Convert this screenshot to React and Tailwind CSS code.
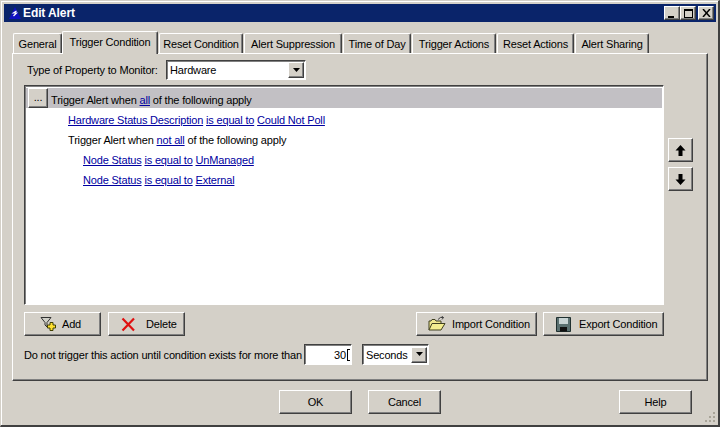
import React from "react";

const raised = "border border-t-white border-l-white border-r-[#404040] border-b-[#404040] shadow-[inset_-1px_-1px_0_#808080] bg-[#d4d0c8]";
const sunken = "border border-t-[#404040] border-l-[#404040] border-r-white border-b-white shadow-[inset_1px_1px_0_#808080]";
const link = "text-[#0000a0] underline";

function Tab({ w, active, children }) {
  return (
    <div
      className={
        active
          ? "relative z-10 -mb-px h-[23px] -ml-px mr-px flex items-center justify-center rounded-t-[2px] border-t border-l border-r border-t-white border-l-white border-r-[#404040] bg-[#d4d0c8] shadow-[inset_-1px_0_0_#808080] pb-[2px] whitespace-nowrap"
          : "mt-[2px] h-[20px] flex items-center justify-center rounded-t-[2px] border-t border-l border-r border-t-white border-l-white border-r-[#404040] shadow-[inset_-1px_0_0_#808080] mr-px whitespace-nowrap"
      }
      style={{ width: w }}
    >
      {children}
    </div>
  );
}

function Arrow() {
  return (
    <svg width="9" height="5" viewBox="0 0 9 5"><path d="M1 0h7L4.500 4z" fill="#000" /></svg>
  );
}

function DropBtn() {
  return <div className={`${raised} w-[16px] h-[16px] flex items-center justify-center`}><Arrow /></div>;
}

function Btn({ w, children, className = "" }) {
  return <div className={`${raised} h-[24px] flex items-center whitespace-nowrap ${className || "justify-center"}`} style={{ width: w }}>{children}</div>;
}

function WinBtn({ w = 16, children }) {
  return <div className={`${raised} h-[14px] flex items-center justify-center`} style={{ width: w }}>{children}</div>;
}

export default function App() {
  return (
    <div className="w-[720px] h-[427px] bg-[#d4d0c8] flex flex-col p-[4px] border-t border-l border-t-[#d4d0c8] border-r-2 border-b-2 border-r-[#404040] border-b-[#404040] border-l-[#d4d0c8] text-[11px] tracking-[-0.18px] leading-[14px] text-black overflow-hidden relative shadow-[inset_1px_1px_0_#fff]" style={{ fontFamily: '"Liberation Sans", Arial, sans-serif' }}>
      <div className="h-[18px] -mt-px -ml-px -mr-[2px] bg-[#0a246a] flex items-center shrink-0 pl-[3px] pr-[2px]">
        <svg width="16" height="16" viewBox="0 0 16 16" className="shrink-0">
          <path d="M8 2 L14 14 H2 Z" fill="#1010c0" />
          <path d="M9.500 6 L6.500 8 H9.500 L6.500 11" stroke="#fff" strokeWidth="1.200" fill="none" />
        </svg>
        <span className="text-white font-bold text-[12px] tracking-[-0.1px]">Edit Alert</span>
        <div className="ml-auto flex items-center">
          <WinBtn w={16}><div className="w-[6px] h-[2px] bg-black mt-[7px] -ml-[2px]" /></WinBtn>
          <WinBtn w={16}><div className="w-[9px] h-[9px] border border-black border-t-2" /></WinBtn>
          <div className="ml-[2px]"><WinBtn w={16}>
            <svg width="9" height="8" viewBox="0 0 9 8"><path d="M1 0l7 8M8 0l-7 8" stroke="#000" strokeWidth="1.500" /></svg>
          </WinBtn></div>
        </div>
      </div>

      <div className="flex pl-[9px] mt-[9px] items-end h-[22px] shrink-0 -ml-px">
        <Tab w={49}>General</Tab>
        <Tab w={96} active>Trigger Condition</Tab>
        <Tab w={84}>Reset Condition</Tab>
        <Tab w={98}>Alert Suppression</Tab>
        <Tab w={68}>Time of Day</Tab>
        <Tab w={84}>Trigger Actions</Tab>
        <Tab w={77}>Reset Actions</Tab>
        <Tab w={74}>Alert Sharing</Tab>
      </div>

      <div className="ml-[7px] w-[696px] h-[328px] border border-t-white border-l-white border-r-[#404040] border-b-[#404040] shadow-[inset_-1px_-1px_0_#808080] flex flex-col pl-[11px] pt-[6px] shrink-0">
        <div className="flex items-center h-[20px] pl-[3px]">
          <span className="w-[139px] whitespace-nowrap">Type of Property to Monitor:</span>
          <div className={`${sunken} w-[140px] h-[20px] bg-white flex items-center justify-between pl-[3px] pr-[1px]`}>
            <span>Hardware</span>
            <DropBtn />
          </div>
        </div>

        <div className="flex mt-[5px]">
          <div className={`${sunken} w-[640px] h-[220px] bg-white p-[1px] pt-[2px]`}>
            <div className="h-[20px] bg-[#c2c0c4] flex items-center pl-[2px]">
              <div className={`${raised} w-[20px] h-[20px] flex items-center justify-center pb-[3px]`}>...</div>
              <span className="ml-[3px] pt-[3px]">Trigger Alert when <span className={link}>all</span> of the following apply</span>
            </div>
            <div className="h-[20px] flex items-center pl-[42px] pt-[3px]">
              <span><span className={link}>Hardware Status Description</span> <span className={link}>is equal to</span> <span className={link}>Could Not Poll</span></span>
            </div>
            <div className="h-[20px] flex items-center pl-[42px] pt-[3px]">
              <span>Trigger Alert when <span className={link}>not all</span> of the following apply</span>
            </div>
            <div className="h-[20px] flex items-center pl-[57px] pt-[3px]">
              <span><span className={link}>Node Status</span> <span className={link}>is equal to</span> <span className={link}>UnManaged</span></span>
            </div>
            <div className="h-[20px] flex items-center pl-[57px] pt-[3px]">
              <span><span className={link}>Node Status</span> <span className={link}>is equal to</span> <span className={link}>External</span></span>
            </div>
          </div>
          <div className="ml-[4px] mt-[53px] flex flex-col gap-[5px]">
            <Btn w={25}>
              <svg width="11" height="11" viewBox="0 0 11 11"><path d="M5.500 0 L10.500 5.500 H7.500 V11 H3.500 V5.500 H0.500 Z" fill="#000" /></svg>
            </Btn>
            <Btn w={25}>
              <svg width="11" height="11" viewBox="0 0 11 11"><path d="M5.500 11 L10.500 5.500 H7.500 V0 H3.500 V5.500 H0.500 Z" fill="#000" /></svg>
            </Btn>
          </div>
        </div>

        <div className="flex mt-[7px] w-[640px]">
          <Btn w={77} className="pl-[15px]">
            <svg width="17" height="16" viewBox="0 0 17 16" className="mr-[5px]">
              <path d="M1 1.500 H11 L7 6.500 V11 L5 9 V6.500 Z" fill="#d0d0c8" stroke="#303030" strokeWidth="1" />
              <path d="M10 6.500 h3 v2.500 h2.500 v3 h-2.500 v2.500 h-3 v-2.500 h-2.500 v-3 h2.500 z" fill="#ffe030" stroke="#404000" strokeWidth="1" />
            </svg>
            <span>Add</span>
          </Btn>
          <Btn w={77} className="ml-[7px] pl-[12px]">
            <svg width="15" height="15" viewBox="0 0 15 15" className="mr-[10px]">
              <path d="M1.500 1.500 L13 13.500 M13 1.500 L1.500 13.500" stroke="#e01010" strokeWidth="2.200" />
            </svg>
            <span>Delete</span>
          </Btn>
          <Btn w={121} className="ml-auto pl-[11px]">
            <svg width="18" height="16" viewBox="0 0 18 16" className="mr-[6px]">
              <path d="M1 14 V5 H3 L4 3.500 H7 L8 5 H13 V7" fill="#f0e890" stroke="#404020" />
              <path d="M1 14 L4 7.500 H17 L13 14 Z" fill="#f4ee90" stroke="#404020" />
              <path d="M10 3.500 Q12 0.500 15.500 1.500 M15.500 1.500 L13.500 0 M15.500 1.500 L14 3.500" stroke="#404040" fill="none" />
            </svg>
            <span>Import Condition</span>
          </Btn>
          <Btn w={121} className="ml-[6px] pl-[12px]">
            <svg width="15" height="15" viewBox="0 0 15 15" className="mr-[8px]">
              <path d="M0.500 0.500 H14.500 V14.500 H0.500 Z" fill="#5a7070" stroke="#203030" />
              <path d="M3 1 H12 V7 H3 Z" fill="#c8d4d4" />
              <path d="M4 10 H11 V14.500 H4 Z" fill="#101010" />
            </svg>
            <span>Export Condition</span>
          </Btn>
        </div>

        <div className="flex items-center mt-[8px] h-[21px]">
          <span className="w-[280px] whitespace-nowrap">Do not trigger this action until condition exists for more than</span>
          <div className={`${sunken} w-[48px] h-[21px] bg-white flex items-center justify-end pr-[1px] shrink-0`}>
            <span>30</span>
            <div className="w-[3px] h-[12px] border-l border-t border-b border-black ml-[1px]" />
          </div>
          <div className={`${sunken} ml-[10px] w-[67px] h-[21px] bg-white flex items-center justify-between pl-[3px] pr-[1px] shrink-0`}>
            <span>Seconds</span>
            <DropBtn />
          </div>
        </div>
      </div>

      <div className="flex ml-[274px] mt-[9px] shrink-0">
        <Btn w={73}>OK</Btn>
        <div className="ml-[16px]"><Btn w={73}>Cancel</Btn></div>
        <div className="ml-[178px]"><Btn w={73}>Help</Btn></div>
      </div>

      <svg width="12" height="12" viewBox="0 0 12 12" className="absolute right-[2px] bottom-[2px]">
        <path d="M9 1h2v2h-2zM5 5h2v2h-2zM9 5h2v2h-2zM1 9h2v2h-2zM5 9h2v2h-2zM9 9h2v2h-2z" fill="#a8a498" />
      </svg>
    </div>
  );
}
